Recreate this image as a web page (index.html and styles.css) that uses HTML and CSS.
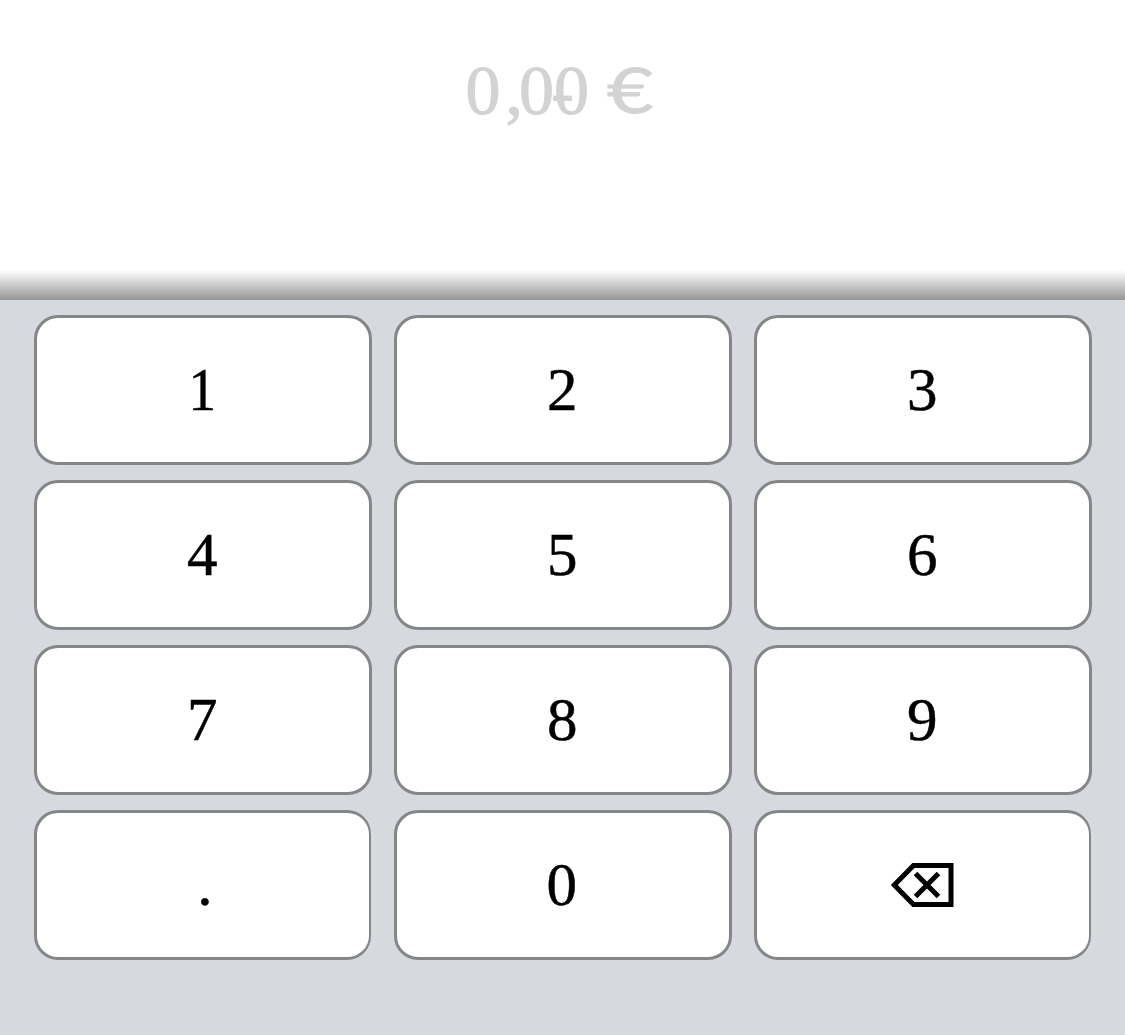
FILE: index.html
```html
<!DOCTYPE html>
<html lang="en">
<head>
<meta charset="utf-8">
<title>Amount</title>
<link rel="stylesheet" href="styles.css">
</head>
<body>
<main class="screen">
  <section class="display">
    <div class="amount"><span class="value">0<span class="comma">,</span>00</span><span class="euro">€</span></div>
    <span class="placeholder">-</span>
  </section>
  <section class="keypad">
    <button class="key"><span class="digit-one">1</span></button>
    <button class="key">2</button>
    <button class="key">3</button>
    <button class="key">4</button>
    <button class="key">5</button>
    <button class="key">6</button>
    <button class="key">7</button>
    <button class="key">8</button>
    <button class="key">9</button>
    <button class="key key-narrow key-dot">.</button>
    <button class="key key-zero">0</button>
    <button class="key key-narrow key-delete" aria-label="Delete">
      <svg class="delete-icon" width="64" height="46" viewBox="0 0 64 46" fill="none" stroke="#000">
        <path d="M60 3.500H22.500L3.300 23L22.500 42.500H60Z" stroke-width="5"/>
        <path d="M24.500 11.500L47.500 34.500M47.500 11.500L24.500 34.500" stroke-width="5"/>
      </svg>
    </button>
  </section>
</main>
</body>
</html>
```
FILE: styles.css
```css
* {
  box-sizing: border-box;
}

body {
  margin: 0;
  background: #fff;
  font-family: "Liberation Serif", "Times New Roman", serif;
}

.screen {
  display: flex;
  flex-direction: column;
  width: 1125px;
  height: 1035px;
  overflow: hidden;
}

.display {
  position: relative;
  height: 300px;
  padding-top: 51px;
  color: #d3d3d3;
  font-size: 70px;
  line-height: 80px;
  background: linear-gradient(rgba(150, 150, 150, 0), #969696) bottom / 100% 30px no-repeat;
}

.amount {
  display: flex;
  padding-left: 465.5px;
}

.value {
  -webkit-text-stroke: 1px #d3d3d3;
}

.comma {
  margin: 0 -4px 0 5px;
}

.euro {
  margin: -1px 0 0 18px;
  font-family: Lato, "Liberation Sans", sans-serif;
  font-size: 61px;
  transform: scaleX(1.32);
  transform-origin: left;
  -webkit-text-stroke: 0.8px #d3d3d3;
}

.placeholder {
  position: absolute;
  top: 51px;
  left: 0;
  width: 100%;
  text-align: center;
  font-size: 72px;
}

.keypad {
  display: grid;
  grid-template-columns: repeat(3, 338px);
  grid-auto-rows: 150px;
  gap: 15px 22px;
  height: 735px;
  padding: 15px 33.75px;
  background: #d6d9de;
}

.key {
  display: flex;
  align-items: center;
  justify-content: center;
  margin: 0;
  padding: 0 1px 2px 0;
  border: 3px solid #858688;
  border-radius: 24px;
  background: #fff;
  color: #000;
  font-family: inherit;
  font-size: 61px;
  line-height: 69px;
  -webkit-text-stroke: 0.5px #000;
}

.digit-one {
  transform: scaleX(0.9);
}

.key-narrow {
  width: 337px;
  border-right-width: 2px;
}

.key-dot {
  padding-left: 5px;
}

.key-zero {
  padding-right: 2px;
}

.key-delete {
  padding: 0 0 0 1px;
}
```
